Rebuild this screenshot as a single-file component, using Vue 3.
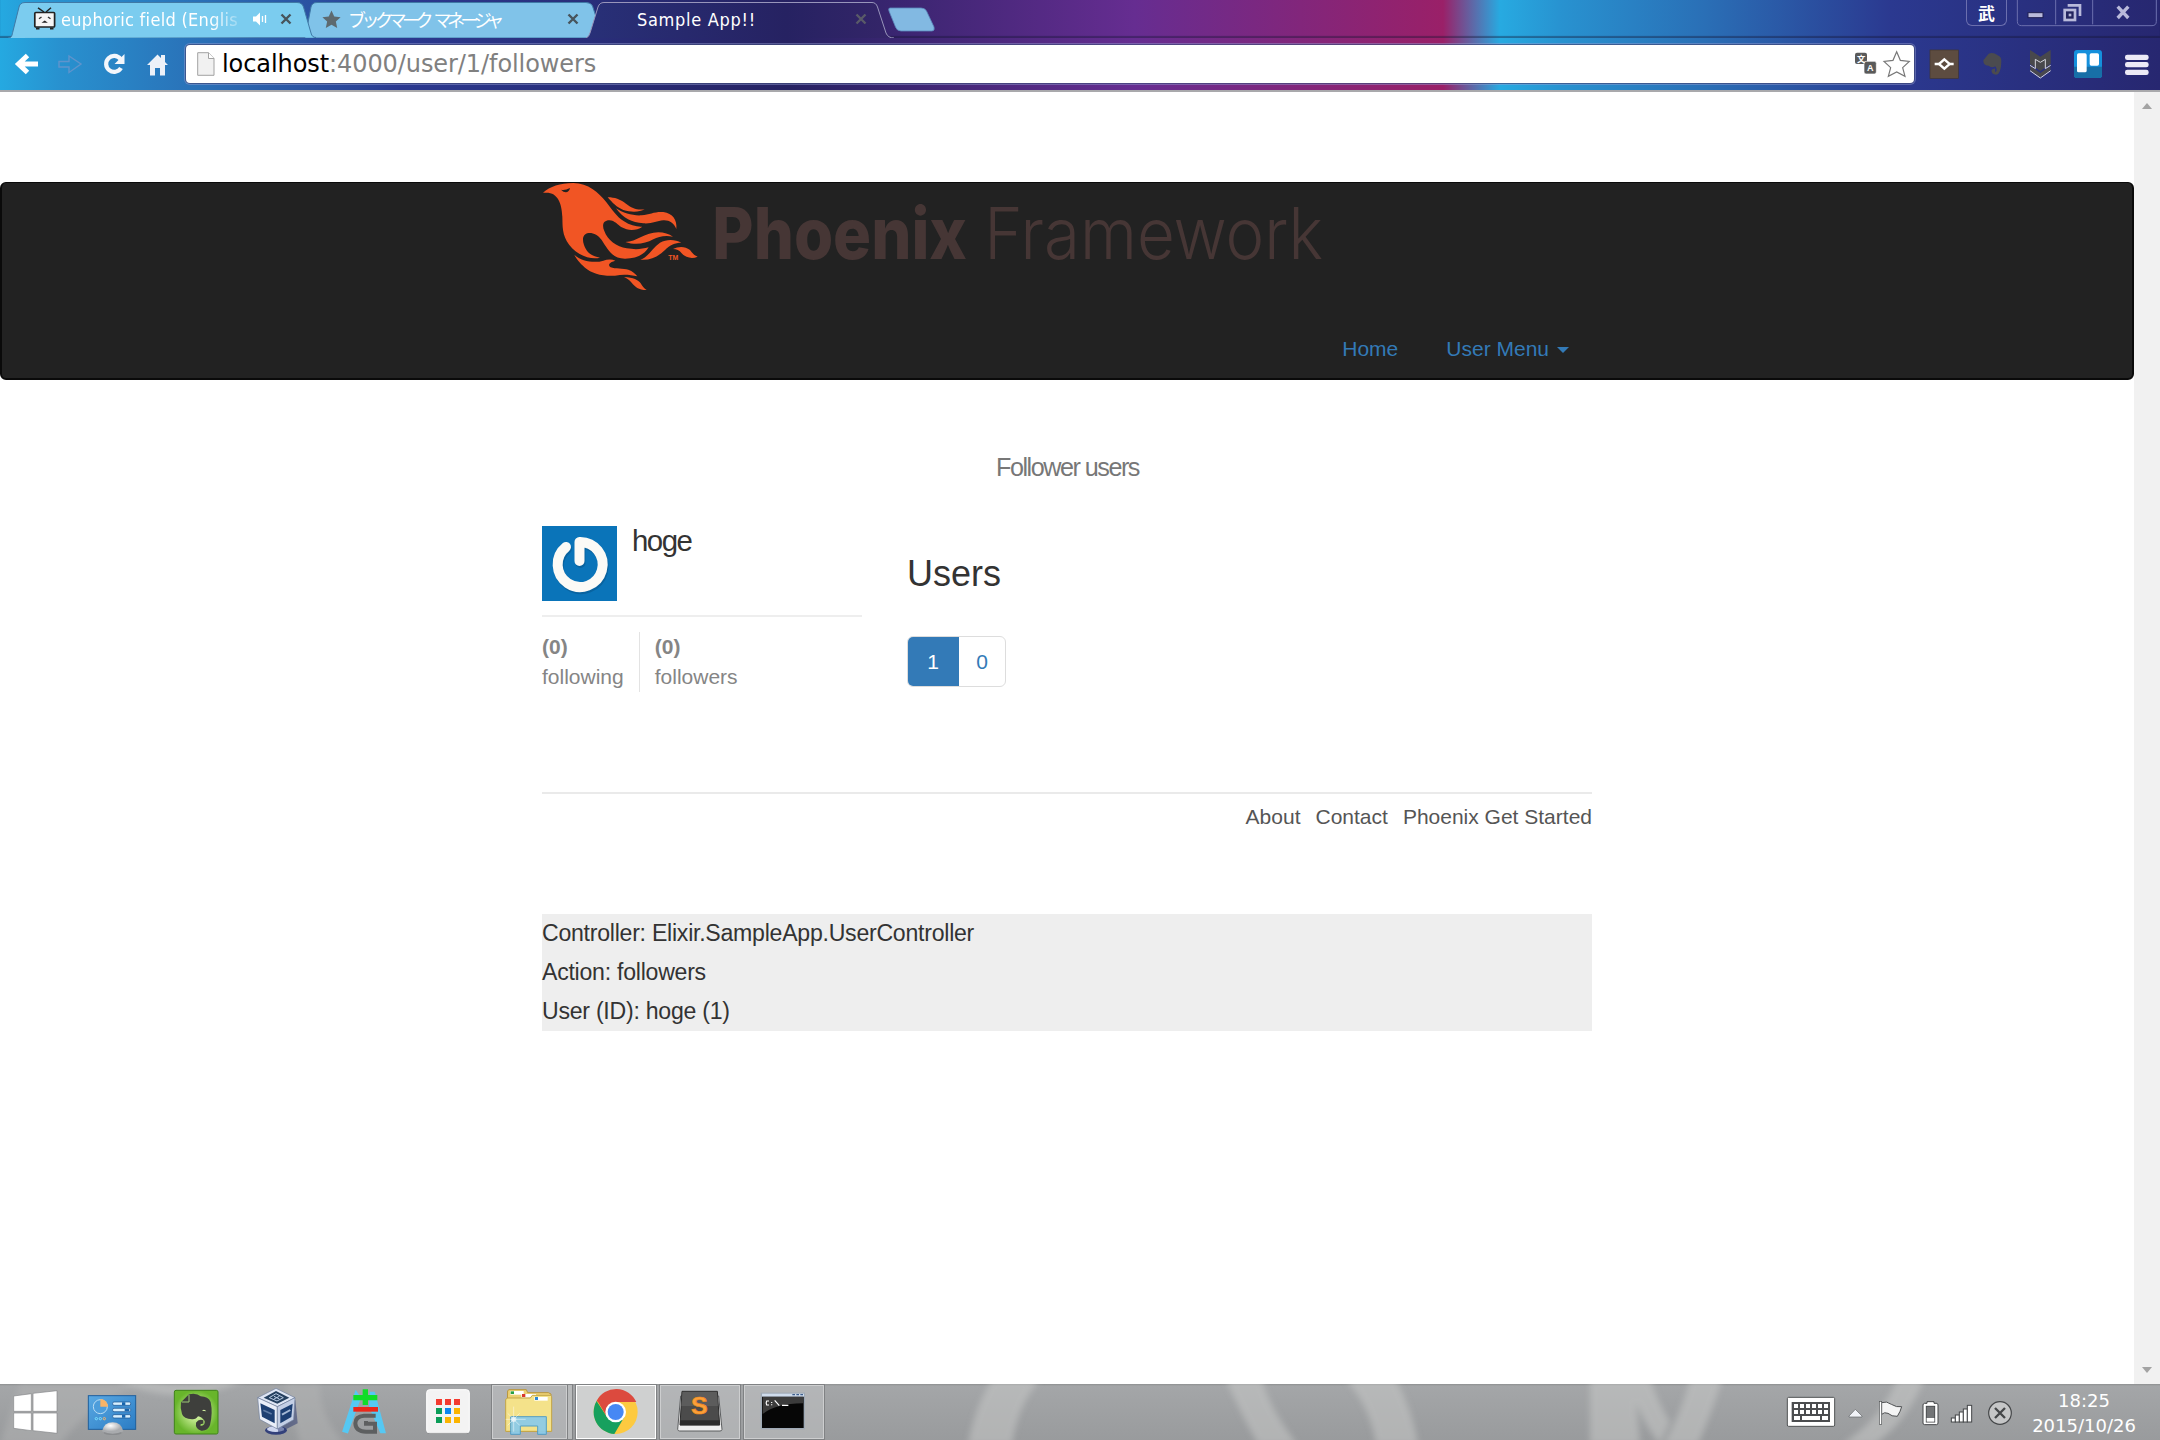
<script setup>
const footerLinks = ['About', 'Contact', 'Phoenix Get Started']
const debugLines = [
  'Controller: Elixir.SampleApp.UserController',
  'Action: followers',
  'User (ID): hoge (1)',
]
const stats = [
  { count: '(0)', label: 'following' },
  { count: '(0)', label: 'followers' },
]
const keyRows = [
  { y: 132, xs: [282, 300, 318, 336, 354, 372] },
  { y: 150, xs: [282, 300, 318, 336, 354, 372] },
]
const tiles = [
  ['#f33b30', 1308, 87], ['#f33b30', 1335, 87], ['#f33b30', 1362, 87],
  ['#0b9d58', 1308, 114], ['#0b86f0', 1335, 114], ['#fbb400', 1362, 114],
  ['#0b9d58', 1308, 141], ['#fbb400', 1335, 141], ['#fbb400', 1362, 141],
]
</script>

<template>
  <div class="screen">
    <header class="chrome">
      <div class="tabstrip">
        <div class="tab tab-one">
          <svg class="shape" width="308" height="38" viewBox="8 0 308 38">
            <path d="M8 38 C12 38 12 35 13 31 L19 7 Q20 2.5 25 2.5 H297 Q302 2.5 303.500 7 L311 33 Q312 37.500 316 37.500 Z" fill="#7bccef" />
            <path d="M8 38 C12 38 12 35 13 31 L19 7 Q20 2.5 25 2.5 H297 Q302 2.5 303.500 7 L311 33 Q312 37.500 316 37.500" fill="none" stroke="#3f79a6" />
          </svg>
          <svg class="tv" width="24" height="24" viewBox="0 0 24 24">
            <path d="M5 .800 L11 5 M18 .800 L13 5" stroke="#222" stroke-width="1.500" />
            <rect x="1.800" y="5.500" width="19.800" height="14.500" rx="1" fill="#f5f5f5" stroke="#222" stroke-width="1.700" />
            <path d="M6 11.800 l2.500 -1.800 M17.500 11.800 l-2.500 -1.800" stroke="#333" stroke-width="1.400" />
            <path d="M8.500 15.800 l3.200 -2.400 l3.200 2.400z" fill="#222" />
            <path d="M3 21.500h3.500M17 21.500h3.500" stroke="#222" stroke-width="2" />
          </svg>
          <span class="tab-text faded">euphoric field (Englis</span>
          <svg class="speaker" width="16" height="14" viewBox="0 0 16 14">
            <path d="M0 4.500h3l4-4v13l-4-4H0z" fill="#fff" />
            <path d="M9.500 4v6M12.500 3v8" stroke="#fff" stroke-width="1.300" />
          </svg>
          <svg class="close" width="12" height="12" viewBox="0 0 12 12"><path d="M1.500 1.500l9 9M10.500 1.500l-9 9" stroke="#47545c" stroke-width="2.400" /></svg>
        </div>
        <div class="tab tab-two">
          <svg class="shape" width="294" height="38" viewBox="305 0 294 38">
            <path d="M305 38 L311 7 Q312 2.500 317 2.500 H586 Q591 2.500 592.500 6 L597 20 L588 38 Z" fill="#80c3e9" stroke="#3f79a6" />
          </svg>
          <svg class="star" width="19" height="19" viewBox="0 0 20 20"><path d="M10 0.500l2.900 6.300 6.700.8-5 4.600 1.400 6.800-6-3.400-6 3.400 1.400-6.800-5-4.600 6.700-.8z" fill="#5d6a70" /></svg>
          <span class="tab-text jp">ブックマーク マネージャ</span>
          <svg class="close" width="12" height="12" viewBox="0 0 12 12"><path d="M1.500 1.500l9 9M10.500 1.500l-9 9" stroke="#47545c" stroke-width="2.400" /></svg>
        </div>
        <div class="tab tab-active">
          <svg class="shape" width="310" height="38" viewBox="586 0 310 38">
            <defs>
              <linearGradient id="activeFill" x1="0" x2="1" y1="0" y2="0">
                <stop offset="0" stop-color="#283078" /><stop offset="0.650" stop-color="#262262" /><stop offset="1" stop-color="#352569" />
              </linearGradient>
            </defs>
            <path d="M586 38 Q589 37 590 33 L598 7 Q599.500 2.500 604 2.500 H872 Q876 2.500 877.500 7 L886 33 Q888 38 894 38 Z" fill="url(#activeFill)" />
            <path d="M586 38 Q589 37 590 33 L598 7 Q599.500 2.500 604 2.500 H872 Q876 2.500 877.500 7 L886 33 Q888 38 894 38" fill="none" stroke="#9895bb" />
          </svg>
          <span class="tab-text sample">Sample App!!</span>
          <svg class="close" width="12" height="12" viewBox="0 0 12 12"><path d="M1.500 1.500l9 9M10.500 1.500l-9 9" stroke="#595a68" stroke-width="2.400" /></svg>
        </div>
        <svg class="newtab" width="48" height="25" viewBox="0 0 48 25"><path d="M2 1H33Q37 1 38.500 4L46 20Q47 24 44 24H13Q9 24 7.500 20L1 4Q0 1 2 1Z" fill="#82b9e2" stroke="#5c89bd" stroke-width=".8" /></svg>

        <div class="caption">
          <div class="user-badge">武</div>
          <svg class="winbtns" width="144" height="38" viewBox="945 0 432 114">
            <path d="M949 -4 V64 Q949 77 962 77 H1353 Q1366 77 1366 64 V-4" fill="none" stroke="#6b6fae" stroke-width="3" />
            <path d="M1064 0V73M1175 0V73" stroke="#6b6fae" stroke-width="3" />
            <rect x="981" y="38" width="45" height="15" fill="#b9badb" stroke="#1f1f52" stroke-width="3" />
            <path d="M1100 16H1137V48" fill="none" stroke="#b9badb" stroke-width="8" />
            <rect x="1091" y="30" width="31" height="30" fill="#23245f" stroke="#b9badb" stroke-width="8" />
            <rect x="1103" y="41" width="8" height="8" fill="#b9badb" />
            <path d="M1250 20L1282 54M1282 20L1250 54" stroke="#b9badb" stroke-width="10" />
          </svg>
        </div>
      </div>

      <div class="toolbar">
        <svg width="186" height="52" viewBox="0 38 186 52" fill="none">
          <path d="M38 64H20M27.500 55.500L18.500 64L27.500 72.500" stroke="#fff" stroke-width="5" />
          <path d="M59 61.500H69V56L81 64L69 72.500V67H59Z" stroke="#5f94cc" stroke-width="1.400" />
          <path d="M120.500 59A8 8 0 1 0 121 68" stroke="#f3f6fb" stroke-width="4.200" />
          <path d="M124.500 54V64H114.500Z" fill="#f3f6fb" />
          <path d="M147 65L157.500 54.500L161 58V55H165V62L168 65H165V75.500H160V68H155V75.500H150V65Z" fill="#edf1f8" />
        </svg>
        <div class="omnibox">
          <svg width="18" height="24" viewBox="0 0 18 24"><path d="M.7.700H11.500L17 6.500V23.300H.700Z" fill="#f1f1f1" stroke="#a2a2a2" /><path d="M11.500.700V6.500H17" fill="#fff" stroke="#a2a2a2" /></svg>
          <span class="url"><b>localhost</b>:4000/user/1/followers</span>
          <svg class="omni-icons" width="60" height="38" viewBox="457 135 180 114">
            <rect x="463" y="158" width="36" height="34" rx="6" fill="#5a5a5a" />
            <rect x="490" y="184" width="37" height="38" rx="6" fill="#5a5a5a" stroke="#fff" stroke-width="2" />
            <text x="469" y="185" font-size="25" fill="#fff" class="cjk">文</text>
            <text x="499" y="213" font-size="27" fill="#fff" class="bold">A</text>
            <path d="M588 155L599 181L626 184L606 203L613 229L588 216L563 229L570 203L550 184L577 181Z" fill="#fff" stroke="#777" stroke-width="3.500" />
          </svg>
        </div>
        <svg width="246" height="52" viewBox="642 114 738 156">
          <rect x="690" y="150" width="85" height="85" fill="#5d4c40" stroke="#42372f" stroke-width="2" />
          <path d="M733 178L749 192L733 206L717 192Z" fill="none" stroke="#fff" stroke-width="7" />
          <path d="M704 192H717M749 192H761" stroke="#fff" stroke-width="8" />
          <path d="M850 181L866 161Q880 156 893 166Q905 170 904 186Q903 222 889 224Q872 222 875 209L885 205V217Q895 212 886 199Q876 205 866 197Q850 198 850 181Z" fill="#4b4b4f" />
          <path d="M990 150L1021 170L1052 150V192L1021 213L990 192Z" fill="#48484c" />
          <path d="M991 198L1021 219L1051 198V211L1021 232L991 211Z" fill="#48484c" />
          <path d="M1006 206V178L1021 187L1036 178V206M990 196L1006 206M1052 196L1036 206M990 212L1021 234L1052 212" fill="none" stroke="#d5d5de" stroke-width="3" />
          <rect x="1122" y="150" width="84" height="84" rx="9" fill="#1590dc" />
          <path d="M1122 200H1206V225Q1206 234 1197 234H1131Q1122 234 1122 225Z" fill="#176fa7" />
          <rect x="1131" y="160" width="29" height="57" rx="5" fill="#fff" /><rect x="1169" y="160" width="28" height="37" rx="5" fill="#fff" />
          <g fill="#eceaf6"><rect x="1275" y="164" width="71" height="16" rx="7" /><rect x="1275" y="186" width="71" height="16" rx="7" /><rect x="1275" y="209" width="71" height="16" rx="7" /></g>
        </svg>
      </div>
    </header>

    <div class="viewport">
      <div class="page">
        <nav class="navbar">
          <div class="container nav-inner">
            <svg class="logo" width="800" height="115" viewBox="69 39 2400 345">
              <g fill="#f15524">
                <path d="M69 68C90 50 120 39 160 39C205 39 235 68 258 95C275 117 290 140 312 154C330 166 350 171 367 170C350 182 325 183 305 172C292 164 285 152 268 151C250 151 245 165 253 183C262 210 290 230 320 235C345 239 365 238 386 232C375 252 350 266 315 266C275 266 262 235 245 210C235 195 220 188 206 189C188 191 186 208 192 225C200 248 215 258 240 263C210 270 170 255 148 225C125 195 128 165 127 140C126 110 118 72 85 68Z" />
                <path d="M263 82C285 82 300 88 318 101C335 114 350 121 374 118C360 126 335 128 310 120C290 112 277 98 263 82Z" />
                <path d="M288 115C310 130 340 138 365 136C390 133 405 124 430 126C458 130 472 150 469 177C462 160 448 150 430 151C410 153 395 162 370 160C335 157 310 145 288 115Z" />
                <path d="M316 216C350 216 375 187 415 187C432 187 447 192 459 200C435 195 415 200 400 208C375 222 345 226 316 216Z" />
                <path d="M361 269C385 262 395 235 420 218C440 207 465 208 484 218C465 218 450 225 435 240C415 260 390 272 361 269Z" />
                <path d="M459 237C475 229 495 228 510 240C518 250 522 256 533 260C515 268 495 262 485 250C478 240 470 237 459 237Z" />
                <path d="M163 254C185 275 225 280 250 272C262 268 275 267 286 272C268 277 262 284 272 292C285 297 310 295 325 299C338 304 346 311 352 319C330 314 310 312 285 317C250 320 215 310 195 293C178 277 170 268 163 254Z" />
                <path d="M312 321C340 322 355 330 362 340C368 350 372 356 380 360C355 360 345 350 335 338C328 330 320 325 312 321Z" />
                <text x="445" y="270" font-size="21" textLength="30" lengthAdjust="spacingAndGlyphs" class="bold">TM</text>
              </g>
              <path d="M123 59C132 62 140 58 150 54C148 68 134 71 123 59Z" fill="#222" />
              <text x="577" y="266" font-size="213" textLength="764" lengthAdjust="spacingAndGlyphs" class="word-bold">Phoenix</text>
              <text x="1393" y="266" font-size="213" textLength="1016" lengthAdjust="spacingAndGlyphs" class="word-thin">Framework</text>
            </svg>
            <div class="nav-links">
              <a>Home</a>
              <a class="menu">User Menu<i class="caret"></i></a>
            </div>
          </div>
        </nav>

        <h2 class="title">Follower users</h2>

        <div class="container columns">
          <aside class="side">
            <div class="profile">
              <svg width="75" height="75" viewBox="0 0 75 75">
                <rect width="75" height="75" fill="#0a74b9" />
                <path d="M24 21A22.500 22.500 0 1 0 37.500 16V35" transform="translate(1 2)" fill="none" stroke="#064f82" stroke-opacity=".45" stroke-width="10" stroke-linecap="round" stroke-linejoin="round" />
                <path d="M24 21A22.500 22.500 0 1 0 37.500 16V35" fill="none" stroke="#fbfaf6" stroke-width="10" stroke-linecap="round" stroke-linejoin="round" />
              </svg>
              <h1>hoge</h1>
            </div>
            <div class="stats">
              <div v-for="s in stats" :key="s.label" class="stat">
                <strong>{{ s.count }}</strong>
                <span>{{ s.label }}</span>
              </div>
            </div>
          </aside>
          <main class="main">
            <h3>Users</h3>
            <div class="pagination">
              <span class="pg current">1</span>
              <span class="pg">0</span>
            </div>
          </main>
        </div>

        <footer class="container footer">
          <a v-for="l in footerLinks" :key="l">{{ l }}</a>
        </footer>

        <div class="container debug">
          <p v-for="d in debugLines" :key="d">{{ d }}</p>
        </div>
      </div>
      <div class="scrollbar">
        <i class="up"></i>
        <i class="down"></i>
      </div>
    </div>

    <div class="taskbar">
      <svg class="streaks" width="2160" height="56" viewBox="0 0 2160 56" preserveAspectRatio="none">
        <defs><filter id="soft"><feGaussianBlur stdDeviation="3" /></filter></defs>
        <g fill="#c9cac9" filter="url(#soft)" opacity=".52">
          <path d="M115 -4Q180 26 245 -4L228 -6Q180 6 135 -6Z" />
          <path d="M992 -4H1040Q1018 20 1012 60H968Q975 22 992 -4Z" />
          <path d="M1226 -4H1262Q1270 25 1297 60H1258Q1240 28 1226 -4Z" />
          <path d="M1346 -4H1396Q1412 25 1418 60H1376Q1370 22 1346 -4Z" />
          <path d="M1590 -4H1634L1640 60H1590Z" />
          <path d="M1628 -4H1650Q1660 22 1670 38L1660 60Q1640 36 1628 -4Z" />
          <path d="M1690 -4H1722Q1712 28 1698 60H1664Q1682 26 1690 -4Z" />
          <path d="M1897 -4H1924Q1908 36 1875 60H1842Q1880 36 1897 -4Z" />
        </g>
        <g fill="#b5b6b6" filter="url(#soft)" opacity=".45"><path d="M285 0H320Q318 30 345 60H300Z" /><path d="M60 60Q90 20 140 0H20Q10 30 0 60Z" /></g>
      </svg>

      <svg width="72" height="56" viewBox="0 42 216 168">
        <g fill="#fff" stroke="#85878a" stroke-width="2"><path d="M41 78L94 71V124H41ZM99 70L171 62V124H99ZM41 129H94V182L41 175ZM99 129H171V190L99 182Z" /></g>
      </svg>
      <svg width="82" height="56" viewBox="216 42 246 168">
        <defs><linearGradient id="cp" x1="0" y1="0" x2="1" y2="1"><stop offset="0" stop-color="#5aa9e3" /><stop offset="1" stop-color="#2b7cc4" /></linearGradient>
          <radialGradient id="dome" cx=".4" cy=".3"><stop offset="0" stop-color="#fff" /><stop offset="1" stop-color="#a9abae" /></radialGradient></defs>
        <rect x="265" y="77" width="142" height="101" fill="url(#cp)" stroke="#1f5f9c" stroke-width="3" />
        <circle cx="301" cy="110" r="21" fill="#4d9ddb" stroke="#b9dcf4" stroke-width="3" />
        <path d="M301 110V87A23 23 0 0 1 324 110Z" fill="#f8b468" />
        <g fill="#d7f0ff" stroke="#174f8c" stroke-width="2"><rect x="338" y="96" width="54" height="10" rx="4" /><rect x="338" y="115" width="54" height="10" rx="4" /><rect x="338" y="134" width="54" height="10" rx="4" /></g>
        <path d="M366 101H376M374 120H388M366 139H376" stroke="#1665ae" stroke-width="8" />
        <g fill="none" stroke-width="3"><circle cx="289" cy="146" r="3.500" stroke="#7be0ff" /><circle cx="301" cy="146" r="3.500" stroke="#7be0ff" /><circle cx="313" cy="146" r="3.500" stroke="#f8b468" /></g>
        <ellipse cx="338" cy="189" rx="27" ry="6" fill="#8a8c8f" /><path d="M306 184Q312 157 338 157Q364 157 370 184Q338 198 306 184Z" fill="url(#dome)" />
      </svg>
      <svg width="82" height="56" viewBox="462 42 246 168">
        <defs><radialGradient id="eg"><stop offset=".2" stop-color="#d6f5a4" /><stop offset="1" stop-color="#68b52b" /></radialGradient></defs>
        <rect x="523" y="61" width="131" height="131" rx="5" fill="url(#eg)" stroke="#3f8419" stroke-width="3" />
        <path d="M543 97L567 73Q590 68 602 79Q625 80 632 96Q639 130 630 165Q624 183 604 182Q585 176 588 158Q596 146 610 151V161Q599 160 602 168Q616 167 614 153Q606 141 594 139Q588 149 576 148Q551 147 546 132Q540 114 543 97Z" fill="#3e3f3c" />
        <path d="M545 96H567V74" fill="none" stroke="#9cc777" stroke-width="3" /><path d="M606 122Q613 116 619 124Z" fill="#d6f5a4" />
      </svg>
      <svg width="84" height="56" viewBox="708 42 252 168">
        <ellipse cx="828" cy="181" rx="33" ry="13" fill="#33417b" /><ellipse cx="827" cy="177" rx="26" ry="9" fill="#cfd7ef" />
        <path d="M886 90L893 160L834 190V110Z" fill="#25346d" opacity=".5" />
        <path d="M828 55L885 83L832 110L773 83Z" fill="#dfe6f4" stroke="#6f7f9c" stroke-width="2" />
        <path d="M773 83L832 110V177L779 148Z" fill="#e9eef8" stroke="#6f7f9c" stroke-width="2" /><path d="M885 83L832 110V177L881 149Z" fill="#c4cfe5" stroke="#6f7f9c" stroke-width="2" />
        <path d="M828 63L868 83L832 101L791 83Z" fill="#25405f" /><path d="M828 71L850 83L831 93L808 83Z" fill="none" stroke="#b9cbe4" stroke-width="3" /><path d="M822 79L838 87M838 79L822 87" stroke="#b9cbe4" stroke-width="3" />
        <path d="M781 100L824 120V160L786 140Z" fill="#1d3f72" /><path d="M841 120L878 101L874 141L841 160Z" fill="#1d3f72" />
        <path d="M790 121L815 132" stroke="#5f7ca6" stroke-width="5" /><path d="M846 134L871 120" stroke="#a5b8d3" stroke-width="6" />
      </svg>
      <svg width="86" height="56" viewBox="960 42 258 168">
        <path d="M1068 66L1080 84L1042 187L1030 183Z" fill="#56c8f3" stroke="#56c8f3" stroke-width="6" /><path d="M1112 68H1122L1154 187H1143L1110 110Z" fill="#56c8f3" stroke="#56c8f3" stroke-width="6" />
        <path d="M1127 137H1092Q1066 139 1066 160Q1067 184 1098 185H1125V161H1098V153" fill="none" stroke="#5d5f60" stroke-width="12" />
        <path d="M1060 83H1132M1096 58V105" stroke="#0fdd28" stroke-width="16" /><path d="M1060 118H1134" stroke="#ec2619" stroke-width="14" />
      </svg>
      <svg width="85" height="56" viewBox="1218 42 255 168">
        <rect x="1280" y="59" width="128" height="130" rx="9" fill="#f3f3f3" stroke="#fff" stroke-width="3" /><path d="M1283 190H1405" stroke="#7d7f81" stroke-width="2" />
        <rect v-for="(t, i) in tiles" :key="i" :x="t[1]" :y="t[2]" width="18" height="18" :fill="t[0]" />
      </svg>

      <div class="apps">
        <div class="app explorer">
          <svg width="76" height="56" viewBox="36 42 228 168">
            <path d="M86 62L90 59H142L146 68H208L216 72V184H82Z" fill="#ecd073" stroke="#b9963d" stroke-width="3" />
            <rect x="94" y="63" width="40" height="11" fill="#fff" /><rect x="95" y="64" width="10" height="8" fill="#27a044" />
            <rect x="127" y="72" width="44" height="11" fill="#fff" /><rect x="129" y="72" width="10" height="9" fill="#d8372c" />
            <path d="M80 88L86 84H154L160 76H214L218 80V184H80Z" fill="#f4e28a" stroke="#c3a548" stroke-width="3" />
            <rect x="166" y="81" width="40" height="11" fill="#fff" /><rect x="168" y="81" width="9" height="9" fill="#2b86d6" />
            <path d="M95 140H202V193H176V168H124V193H95Z" fill="#8bcbe9" stroke="#4b9ac5" stroke-width="3" opacity=".93" />
            <path d="M104 110V185M80 148H140M86 130L122 166M122 130L86 166" stroke="#fff" stroke-width="2" opacity=".7" /><circle cx="104" cy="148" r="8" fill="#fff" opacity=".6" />
          </svg>
        </div>
        <div class="stack"></div>
        <div class="app active">
          <svg width="82" height="56" viewBox="286 42 246 168">
            <circle cx="408" cy="126" r="66" fill="#fdca40" />
            <path d="M408 126L350.800 93A66 66 0 0 1 470 96H408Z" fill="#dc4a3e" />
            <path d="M350.800 93A66 66 0 0 0 404 192L434 141L408 126L382 141Z" fill="#17a05e" />
            <path d="M352 91L382 141L408 126V96Z" fill="#dc4a3e" />
            <circle cx="408" cy="126" r="31" fill="#fff" /><circle cx="408" cy="126" r="24" fill="#4688f4" />
          </svg>
        </div>
        <div class="app">
          <svg width="82" height="56" viewBox="538 42 246 168">
            <path d="M603 78L594 178Q595 183 600 183H721Q727 183 727 178L717 78Z" fill="#efefef" stroke="#5b5d5f" stroke-width="3" />
            <path d="M607 64H713L720 165H601Z" fill="#4b4b4b" stroke="#2b2b2b" stroke-width="3" /><path d="M601 151H720V166H601Z" fill="#2b2b2b" /><path d="M608 65H712L715 108H605Z" fill="#676767" opacity=".6" />
            <text x="634" y="133" font-size="70" textLength="50" lengthAdjust="spacingAndGlyphs" fill="#fba03a" stroke="#f28a1c" stroke-width="2" class="bold">S</text>
          </svg>
        </div>
        <div class="app">
          <svg width="82" height="56" viewBox="790 42 246 168">
            <rect x="845" y="70" width="129" height="106" fill="#060606" stroke="#9ea9b5" stroke-width="4" />
            <rect x="847" y="71" width="126" height="9" fill="#cfdcec" /><path d="M938 74H946M950 74H958M962 74H970" stroke="#3e5e8c" stroke-width="4" />
            <path d="M849 81H970V100Q890 100 849 132Z" fill="#3b3b3b" />
            <path d="M868 93H861Q858 99 861 105H868M876 96V99M876 103V106M885 91L899 107M907 106H926" fill="none" stroke="#fff" stroke-width="3.500" />
          </svg>
        </div>
      </div>

      <div class="tray">
        <svg width="57" height="56" viewBox="252 72 171 168">
          <rect x="262" y="112" width="142" height="87" rx="4" fill="#fff" stroke="#505254" stroke-width="3" /><rect x="275" y="126" width="115" height="60" fill="#4b4d4f" />
          <template v-for="r in keyRows" :key="r.y"><rect v-for="x in r.xs" :key="x" :x="x" :y="r.y" width="12" height="12" fill="#fff" /></template>
          <g fill="#fff"><rect x="282" y="168" width="18" height="12" /><rect x="306" y="168" width="54" height="12" /><rect x="366" y="168" width="18" height="12" /></g>
        </svg>
        <svg width="35" height="56" viewBox="423 72 105 168"><path d="M447 168L466 148L486 168V171H447Z" fill="#f1f3f8" stroke="#5e6063" stroke-width="2" /></svg>
        <svg width="42" height="56" viewBox="528 72 126 168">
          <path d="M545 128Q560 122 574 133Q590 143 605 140Q602 153 592 169Q575 170 564 160Q553 155 545 163Z" fill="#f4f4f4" stroke="#4f5153" stroke-width="3" /><rect x="538" y="124" width="7" height="69" fill="#fff" stroke="#4f5153" stroke-width="2" />
        </svg>
        <svg width="29" height="56" viewBox="654 72 87 168">
          <path d="M681 130V125H702V130H711Q714 131 714 135V189Q714 194 710 194H674Q669 194 669 189V135Q669 131 673 130Z" fill="#fff" stroke="#454749" stroke-width="3" /><rect x="679" y="139" width="25" height="47" fill="#737577" stroke="#454749" stroke-width="3" /><rect x="680" y="174" width="23" height="11" fill="#fff" />
        </svg>
        <svg width="35" height="56" viewBox="741 72 105 168">
          <g fill="#fff" stroke="#454749" stroke-width="3"><rect x="754" y="174" width="12" height="12" /><rect x="766" y="165" width="12" height="21" /><rect x="778" y="156" width="12" height="30" /><rect x="790" y="147" width="12" height="39" /><rect x="802" y="136" width="13" height="50" /></g>
        </svg>
        <svg width="38" height="56" viewBox="846 72 114 168"><circle cx="900" cy="159" r="34" fill="#c5c6c7" stroke="#454749" stroke-width="3.500" /><path d="M885 144L915 174M915 144L885 174" stroke="#454749" stroke-width="7" /></svg>
        <div class="clock"><span class="time">18:25</span><span class="date">2015/10/26</span></div>
      </div>
    </div>
  </div>
</template>

<style>
body { margin: 0; overflow: hidden; }
</style>

<style scoped>
.screen { width: 2160px; height: 1440px; display: flex; flex-direction: column; background: #fff; font-family: "Liberation Sans", Arial, sans-serif; overflow: hidden; }
svg { flex: none; display: block; }
.bold { font-family: "Liberation Sans", sans-serif; font-weight: 700; }
.cjk { font-family: "Noto Sans CJK JP", sans-serif; font-weight: 700; }

.chrome { height: 90px; border-bottom: 2px solid #a9a9ac; flex: none; font-family: "DejaVu Sans Condensed", "DejaVu Sans", "Noto Sans CJK JP", sans-serif;
  background: linear-gradient(90deg, #25a9e1 0, #2891cf 60px, #2a6fb6 205px, #2b3990 400px, #262262 788px, #662d91 1135px, #9a2068 1443px, #27aae1 1500px, #2892d0 1562px, #2a6fb6 1705px, #2b3990 1890px, #272770 2160px); }
.tabstrip { height: 38px; display: flex; align-items: flex-start; box-sizing: border-box; box-shadow: inset 0 -2px 1px rgba(20, 20, 50, .4); padding-left: 8px; }
.tab { height: 38px; position: relative; display: flex; align-items: center; box-sizing: border-box; }
.shape { position: absolute; left: 0; top: 0; }
.tab > :not(.shape) { position: relative; }
.tab-one { width: 308px; z-index: 2; padding-left: 25px; }
.tab-two { width: 294px; margin-left: -11px; z-index: 1; padding-left: 17px; }
.tab-active { width: 310px; margin-left: -13px; z-index: 3; padding-left: 51px; }
.tab-text { font-size: 18px; line-height: 38px; padding-top: 1px; color: #fff; white-space: nowrap; }
.faded { width: 183px; margin-left: 4px; letter-spacing: .3px; -webkit-mask-image: linear-gradient(90deg, #000 150px, transparent 186px); mask-image: linear-gradient(90deg, #000 150px, transparent 186px); }
.speaker { margin-left: 9px; }
.tab-one .close { margin-left: 11px; }
.jp { margin-left: 7px; width: 218px; padding-top: 0; margin-right: 1px; font-size: 18px; letter-spacing: -4.5px; word-spacing: 5px; font-family: "Noto Sans CJK JP", sans-serif; }
.sample { width: 218px; letter-spacing: .7px; }
.newtab { margin: 7px 0 0 -8px; z-index: 4; }
.caption { display: flex; margin-left: auto; }
.user-badge { width: 39px; height: 25px; border: 1px solid #6b6fae; border-top: 0; border-radius: 0 0 6px 6px; color: #fff; font: 700 17px/25px "Noto Sans CJK JP", sans-serif; text-align: center; margin-right: 9px; }

.toolbar { height: 52px; display: flex; align-items: flex-start; }
.omnibox { width: 1728px; height: 38px; margin-top: 7px; box-sizing: border-box; background: #fff; border-radius: 4px; display: flex; align-items: center; padding-left: 11px; box-shadow: 0 0 0 1px rgba(30, 40, 90, .5), 0 0 0 2px rgba(150, 160, 210, .45); }
.url { font-family: "DejaVu Sans", sans-serif; font-size: 24px; letter-spacing: -.08px; color: #808080; margin-left: 7px; line-height: 38px; }
.url b { font-weight: 400; color: #000; }
.omni-icons { margin-left: auto; margin-right: 1px; }

.viewport { height: 1292px; display: flex; flex: none; }
.page { width: 2134px; flex: none; }
.scrollbar { width: 26px; background: #f1f1f1; display: flex; flex-direction: column; justify-content: space-between; align-items: center; box-sizing: border-box; padding: 11px 0 11px; }
.up, .down { border: 5px solid transparent; }
.up { border-bottom: 6px solid #a3a3a3; border-top: 0; }
.down { border-top: 6px solid #a3a3a3; border-bottom: 0; }
.container { width: 1050px; margin-left: auto; margin-right: auto; box-sizing: border-box; }

.navbar { margin-top: 90px; height: 198px; box-sizing: border-box; background: #222; border: 2px solid #0a0a0a; border-top-width: 1px; border-radius: 6px; }
.nav-inner { display: flex; flex-direction: column; }
.logo { margin-left: 1px; }
.word-bold { font-family: "Inter", sans-serif; font-weight: 800; fill: #463635; }
.word-thin { font-family: "Inter", sans-serif; font-weight: 300; fill: #463635; }
.nav-links { display: flex; justify-content: flex-end; padding-right: 23px; gap: 48px; margin-top: 36px; font-size: 21px; line-height: 30px; color: #337ab7; }
.menu { display: flex; align-items: center; }
.caret { border: 6px solid transparent; border-top-color: #337ab7; border-bottom: 0; margin-left: 8px; margin-top: 2px; }

.title { margin: 72px 0 0; padding-left: 1px; text-align: center; font-size: 25.2px; line-height: 30px; font-weight: 400; letter-spacing: -1.5px; color: #777; }
.columns { display: flex; margin-top: 44px; height: 266px; }
.side { width: 320px; margin-right: 45px; }
.profile { display: flex; gap: 15px; height: 89px; border-bottom: 2px solid #eee; }
.profile h1 { margin: 0; font-size: 29.4px; line-height: 29px; font-weight: 400; letter-spacing: -1.5px; color: #333; }
.stats { display: flex; margin-top: 15px; font-size: 21px; line-height: 30px; color: #858585; }
.stat { display: flex; flex-direction: column; padding-right: 15px; }
.stat + .stat { border-left: 1px solid #e3e3e3; padding-left: 15px; }
.main h3 { margin: 28px 0 0; font-size: 36px; line-height: 40px; font-weight: 400; color: #333; }
.pagination { display: flex; margin-top: 42px; width: 99px; height: 51px; border: 1px solid #ddd; border-radius: 6px; box-sizing: border-box; overflow: hidden; }
.pg { flex: 1; font-size: 21px; line-height: 50px; text-align: center; color: #337ab7; }
.current { flex: none; width: 52px; margin: -1px 0 -1px -1px; line-height: 52px; background: #337ab7; color: #fff; }
.footer { display: flex; justify-content: flex-end; gap: 15px; border-top: 2px solid #eaeaea; padding-top: 8px; height: 40px; font-size: 21px; line-height: 30px; color: #555; }
.debug { margin-top: 82px; height: 117px; background: #eee; }
.debug p { margin: 0; font-size: 23.1px; line-height: 39px; letter-spacing: -.25px; color: #333; }

.taskbar { height: 56px; flex: none; display: flex; position: relative; background: linear-gradient(#8e9091 0, #a4a6a8 2px, #999b9d 56px); }
.taskbar > :not(.streaks) { position: relative; }
.streaks { position: absolute; left: 0; top: 0; }
.apps { display: flex; }
.app { width: 82px; height: 56px; margin-right: 2px; background: rgba(190, 191, 193, .6); box-shadow: inset 0 0 0 1px #808284, inset 0 0 0 2px #cdcecf; }
.explorer { width: 77px; margin-right: 0; }
.stack { width: 5px; height: 56px; margin-right: 2px; background: #b8babb; box-shadow: inset -1px 0 #808284, inset 0 1px #808284, inset 0 -1px #808284; }
.active { background: #cfd0d0; box-shadow: inset 0 0 0 1px #808284, inset 0 0 0 2px #fff; }
.tray { display: flex; margin-left: auto; }
.clock { width: 140px; display: flex; flex-direction: column; align-items: center; color: #fff; font: 18px/25px "DejaVu Sans", sans-serif; padding: 4px 12px 0 0; box-sizing: border-box; }
</style>
